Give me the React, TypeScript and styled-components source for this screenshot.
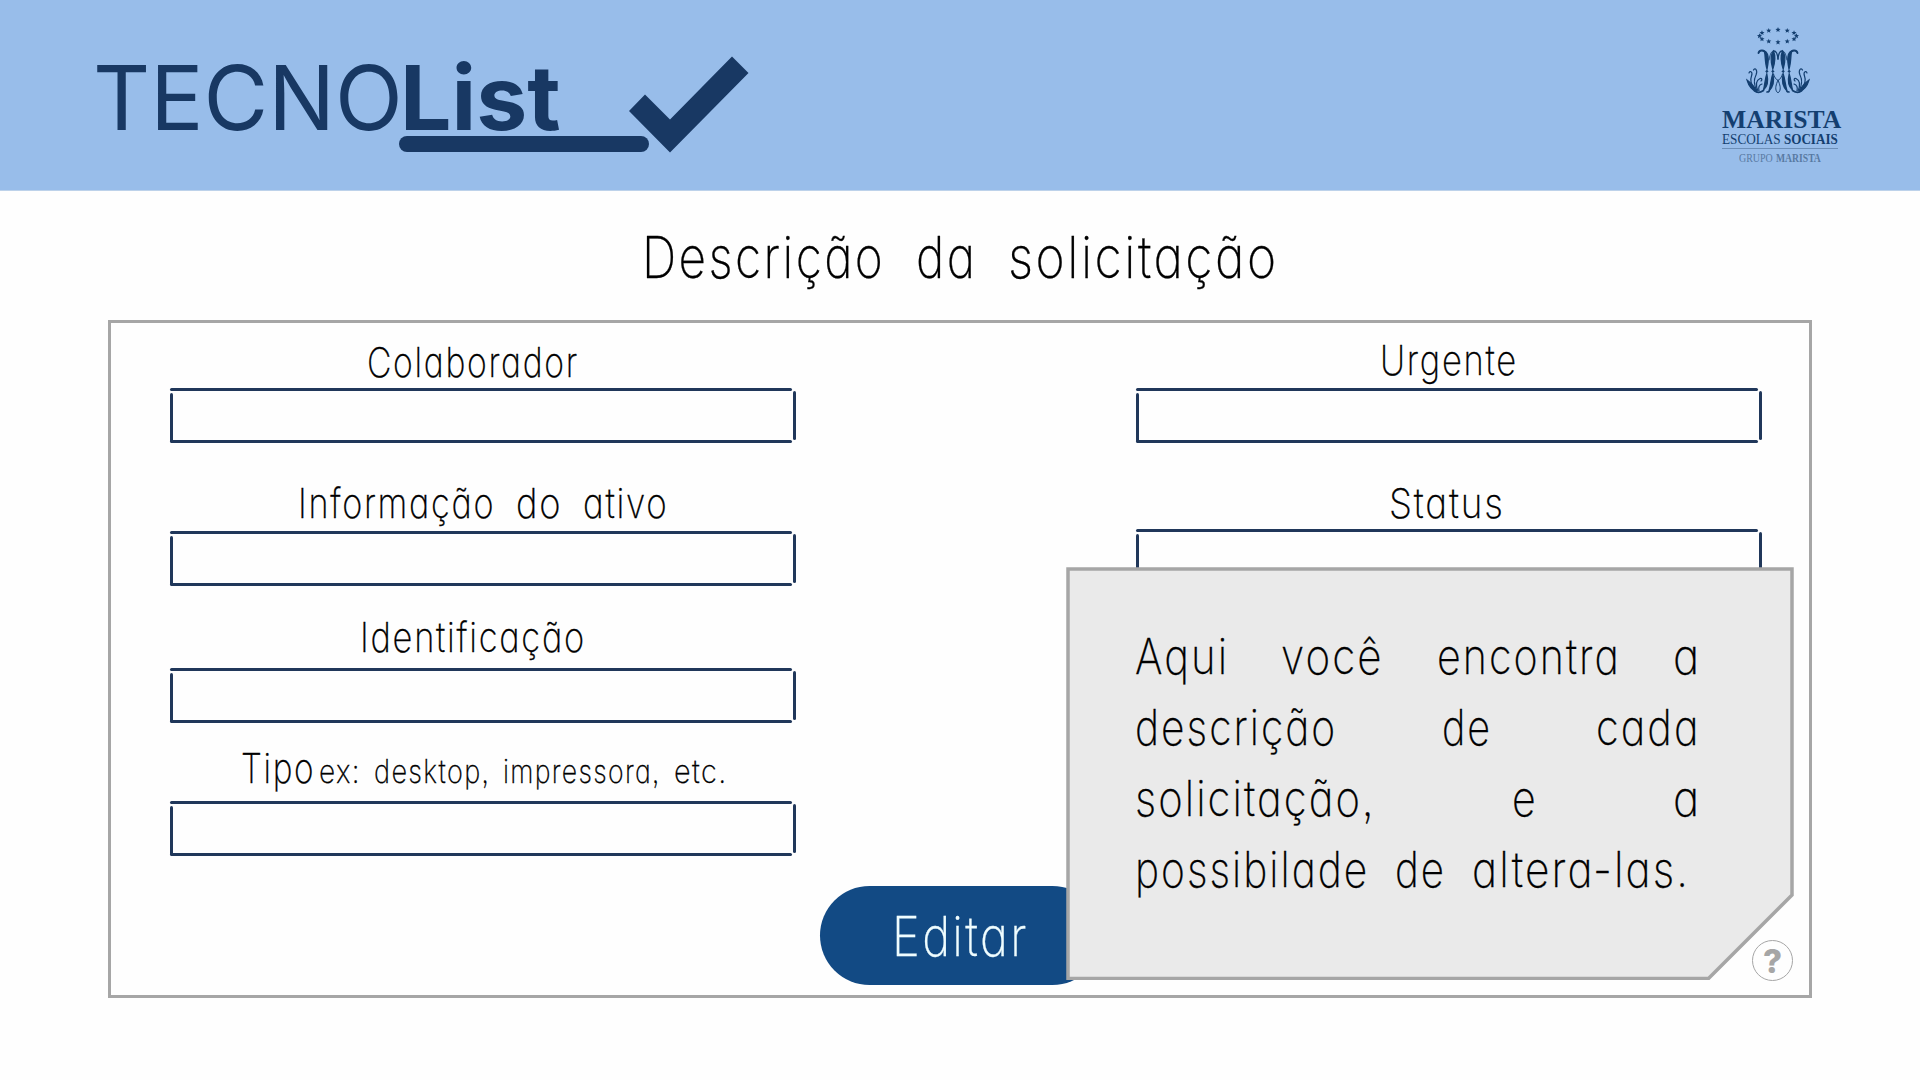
import React, { useLayoutEffect, useRef, useState } from "react";
import styled, { createGlobalStyle } from "styled-components";

const Global = createGlobalStyle`
  * { box-sizing: border-box; }
  body { margin: 0; background: #fefefe; }
`;

const Page = styled.div`
  width: 1920px;
  height: 1080px;
  overflow: hidden;
  background: #fefefe;
  color: #000;
  font-family: Inter, Roboto, sans-serif;
`;

const Header = styled.header`
  height: 191px;
  background: #98bdea;
  border-bottom: 1px solid #bdd2ea;
  display: flex;
  justify-content: space-between;
  color: #183863;
`;

const Brand = styled.div`
  display: flex;
  padding: 44px 0 0 93px;
`;

const BrandList = styled.div`
  width: 250px;
  margin-left: -4px;
`;

const BrandName = styled.div`
  padding-left: 1px;
`;

const BrandUnderline = styled.div`
  width: 250px;
  height: 16px;
  border-radius: 8px;
  background: #183863;
  margin-top: -16px;
`;

const Check = styled.svg`
  width: 120px;
  height: 97px;
  margin: 12px 0 0 -20px;
`;

const School = styled.div`
  width: 119px;
  margin: 27px 79px 0 0;
  display: flex;
  flex-direction: column;
  font-family: "Liberation Serif", serif;
  color: #143f70;
`;

const Emblem = styled.svg`
  width: 66px;
  height: 68px;
  margin: 0 0 12px 23px;
`;

const Rule = styled.div`
  width: 116px;
  height: 1px;
  margin: 2px 0 3px;
  background: #6c8fb9;
`;

const WordBox = styled.span<{ $w: number }>`
  display: block;
  flex: none;
  width: ${(p) => p.$w}px;
  white-space: nowrap;
`;

const Glyphs = styled.span`
  display: inline-block;
  transform-origin: 0 50%;
`;

/* A word condensed horizontally to a set width. */
function Word({ w, children }: { w: number; children: React.ReactNode }) {
  const ref = useRef<HTMLSpanElement>(null);
  const [scale, setScale] = useState(1);
  useLayoutEffect(() => {
    if (ref.current) setScale(w / ref.current.offsetWidth);
  }, [w]);
  return (
    <WordBox $w={w}>
      <Glyphs ref={ref} style={{ transform: `scaleX(${scale})` }}>
        {children}
      </Glyphs>
    </WordBox>
  );
}

const Text = styled.div<{ $size: number; $lh: number; $gap?: number; $weight?: number; $ls?: number }>`
  display: flex;
  gap: ${(p) => p.$gap ?? 0}px;
  font-size: ${(p) => p.$size}px;
  line-height: ${(p) => p.$lh}px;
  height: ${(p) => p.$lh}px;
  font-weight: ${(p) => p.$weight ?? 200};
  letter-spacing: ${(p) => p.$ls ?? 0.05}em;
  font-feature-settings: "cv11", "ss03";
  -webkit-text-stroke: ${(p) => (p.$weight ? 0 : 0.3)}px currentColor;
`;

const Title = styled(Text)`
  justify-content: center;
  margin-top: 26px;
`;

const SchoolGroup = styled(Text)`
  padding-left: 17px;
  color: #587aa3;
`;

const Panel = styled.main`
  position: relative;
  width: 1704px;
  height: 678px;
  margin: 23px 0 0 108px;
  border: 3px solid #a6a6a6;
  display: flex;
  justify-content: space-between;
  padding: 0 46px 0 59px;
`;

const Column = styled.div`
  width: 627px;
`;

const Field = styled.div<{ $top: number }>`
  padding-top: ${(p) => p.$top}px;
`;

const Label = styled.div<{ $x: number; $h: number }>`
  display: flex;
  align-items: baseline;
  gap: 4px;
  height: ${(p) => p.$h}px;
  padding-left: ${(p) => p.$x}px;
`;

const Input = styled.div`
  height: 55px;
  display: grid;
  grid-template-columns: 3px 619px 1px 3px;
  grid-template-rows: 3px 49px 3px;
`;

const Edge = styled.i<{ $area: string; $down?: number }>`
  grid-area: ${(p) => p.$area};
  background: #20375a;
  border-radius: 1.5px;
  margin-top: ${(p) => p.$down ?? 0}px;
  margin-bottom: ${(p) => -(p.$down ?? 0)}px;
`;

function Box() {
  return (
    <Input>
      <Edge $area="1 / 1 / 2 / 3" />
      <Edge $area="2 / 1 / 3 / 2" $down={2} />
      <Edge $area="2 / 4 / 3 / 5" />
      <Edge $area="3 / 1 / 4 / 3" />
    </Input>
  );
}

const Button = styled.button`
  position: absolute;
  left: 709px;
  top: 563px;
  width: 282px;
  height: 99px;
  border: 0;
  padding: 0 0 0 72px;
  border-radius: 50px;
  background: #124a84;
  color: #effdff;
  font-family: inherit;
  display: flex;
  align-items: center;
`;

const Callout = styled.aside`
  position: absolute;
  left: 955px;
  top: 244px;
  width: 728px;
  height: 413px;
  padding: 54px 93px 0 69px;
`;

const CalloutShape = styled.svg`
  position: absolute;
  inset: 0;
`;

const Paragraph = styled.div`
  position: relative;
`;

const ParaLine = styled(Text)<{ $last?: boolean }>`
  justify-content: ${(p) => (p.$last ? "flex-start" : "space-between")};
`;

const Help = styled.div`
  position: absolute;
  left: 1641px;
  top: 617px;
  width: 41px;
  height: 41px;
  border: 1px solid #a6a6a6;
  border-radius: 50%;
  display: flex;
  align-items: center;
  justify-content: center;
  color: #a6a6a6;
  font: 800 33px/40px Inter, sans-serif;
`;

const stars = Array.from({ length: 12 }, (_, i) => {
  const a = (i * Math.PI) / 6;
  return [33 + 18.5 * Math.cos(a), 9 + 6.2 * Math.sin(a)];
});

const starPoints = (cx: number, cy: number) =>
  Array.from({ length: 10 }, (_, i) => {
    const r = i % 2 ? 1.2 : 2.7;
    const a = -Math.PI / 2 + (i * Math.PI) / 5;
    return `${(cx + r * Math.cos(a)).toFixed(2)},${(cy + r * Math.sin(a)).toFixed(2)}`;
  }).join(" ");

function Half() {
  return (
    <g fill="none" stroke="#143f70" strokeLinecap="round">
      <path d="M13.500 26 C14.500 22.500 19.500 22.500 21 27" strokeWidth="1.900" />
      <path d="M19.500 24 C24.500 26 23.500 35 22 42 C20 36 20.500 30 19.500 24Z" fill="#143f70" strokeWidth="1.300" />
      <path d="M28.500 24 C31 30 29.500 37 27.800 42 C26 36 25.500 28 28.500 24Z" fill="#143f70" strokeWidth="1.300" />
      <path d="M29 24 C31 24 32.500 27 33 32" strokeWidth="1.300" />
      <path d="M28 24 C25.500 25 25 29 24 33" strokeWidth="1" />
      <circle cx="21.800" cy="44.400" r="0.900" fill="#143f70" />
      <circle cx="27.800" cy="44.400" r="0.900" fill="#143f70" />
      <path d="M21.800 47 C23.500 54 22 60 18.500 63 C20 57 20 52 21.800 47Z" fill="#143f70" strokeWidth="1.300" />
      <path d="M27.800 47 C29.500 54 28 60 24 64 C26 57 26 52 27.800 47Z" fill="#143f70" strokeWidth="1.300" />
      <path d="M24 64.500 L22 65 M18.500 63.500 C15 66 12 66 9.500 64" strokeWidth="1.600" />
      <path d="M28.500 47 C30 52 32 53 33 53 C31 58 30 61 31.500 64.500 Q32.300 65.500 33 65.500" strokeWidth="1" />
      <path d="M2 53 C4 60 7 63 12 65 C10 60 6 56 2 53Z" fill="#143f70" strokeWidth="1.200" />
      <path d="M9 61 C6 57 5 53 6.500 49 C8 45 5 43 4 46" strokeWidth="1.200" />
      <path d="M12 64 C8 56 9 52 11 48 C13 43 10 40 8.500 43" strokeWidth="1.200" />
      <path d="M13 64 C10 57 12 53 15 51.500 C17 51 17.500 53 16 54" strokeWidth="1.200" />
      <path d="M14 64 C13 60 14 58 17 57" strokeWidth="1.200" />
    </g>
  );
}

export default function App() {
  return (
    <Page>
      <Global />
      <Header>
        <Brand>
          <Text $size={89.5} $lh={108} $weight={400} $ls={0}>
            <Word w={310}>TECNO</Word>
          </Text>
          <BrandList>
            <BrandName>
              <Text $size={89.5} $lh={108} $weight={700} $ls={0}>
                <Word w={161}>List</Word>
              </Text>
            </BrandName>
            <BrandUnderline />
          </BrandList>
          <Check viewBox="629 56 120 97">
            <path d="M732 56.5 748.5 73 670 152.5 629 111 645 94.5 670 119.5Z" fill="#183863" />
          </Check>
        </Brand>
        <School>
          <Emblem viewBox="0 0 66 68">
            {stars.map(([x, y], i) => (
              <polygon key={i} points={starPoints(x, y)} fill="#143f70" />
            ))}
            <Half />
            <g transform="translate(66 0) scale(-1 1)">
              <Half />
            </g>
          </Emblem>
          <Text $size={25} $lh={25} $weight={700} $ls={0}>
            <Word w={119}>MARISTA</Word>
          </Text>
          <Text $size={15} $lh={14} $weight={400} $ls={0} $gap={3}>
            <Word w={59}>ESCOLAS</Word>
            <Word w={54}><b>SOCIAIS</b></Word>
          </Text>
          <Rule />
          <SchoolGroup $size={12} $lh={13} $weight={400} $ls={0} $gap={3}>
            <Word w={34}>GRUPO</Word>
            <Word w={45}><b>MARISTA</b></Word>
          </SchoolGroup>
        </School>
      </Header>
      <Title $size={58} $lh={80} $gap={31}>
        <Word w={243}>Descrição</Word>
        <Word w={61}>da</Word>
        <Word w={271}>solicitação</Word>
      </Title>
      <Panel>
        <Column>
          <Field $top={13}>
            <Label $x={197} $h={52}>
              <Text $size={41} $lh={52}><Word w={212}>Colaborador</Word></Text>
            </Label>
            <Box />
          </Field>
          <Field $top={32}>
            <Label $x={128} $h={56}>
              <Text $size={41} $lh={56} $gap={21}>
                <Word w={197}>Informação</Word>
                <Word w={46}>do</Word>
                <Word w={86}>ativo</Word>
              </Text>
            </Label>
            <Box />
          </Field>
          <Field $top={20}>
            <Label $x={190} $h={62}>
              <Text $size={41} $lh={62}><Word w={226}>Identificação</Word></Text>
            </Label>
            <Box />
          </Field>
          <Field $top={12}>
            <Label $x={71} $h={66}>
              <Text $size={41} $lh={66}><Word w={74}>Tipo</Word></Text>
              <Text $size={32} $lh={40} $gap={13}>
                <Word w={42}>ex:</Word>
                <Word w={116}>desktop,</Word>
                <Word w={158}>impressora,</Word>
                <Word w={54}>etc.</Word>
              </Text>
            </Label>
            <Box />
          </Field>
        </Column>
        <Column>
          <Field $top={9}>
            <Label $x={244} $h={56}>
              <Text $size={41} $lh={57}><Word w={138}>Urgente</Word></Text>
            </Label>
            <Box />
          </Field>
          <Field $top={34}>
            <Label $x={253} $h={52}>
              <Text $size={41} $lh={53}><Word w={116}>Status</Word></Text>
            </Label>
            <Box />
          </Field>
        </Column>
        <Button>
          <Text $size={55} $lh={100}><Word w={137}>Editar</Word></Text>
        </Button>
        <Callout>
          <CalloutShape width="728" height="413">
            <path d="M2 2H726V328L642.500 411.500H2Z" fill="#eaeaea" stroke="#a6a6a6" strokeWidth="3.5" />
          </CalloutShape>
          <Paragraph>
            <ParaLine $size={49} $lh={71}>
              <Word w={94}>Aqui</Word>
              <Word w={103}>você</Word>
              <Word w={184}>encontra</Word>
              <Word w={28}>a</Word>
            </ParaLine>
            <ParaLine $size={49} $lh={71}>
              <Word w={202}>descrição</Word>
              <Word w={50}>de</Word>
              <Word w={105}>cada</Word>
            </ParaLine>
            <ParaLine $size={49} $lh={71}>
              <Word w={241}>solicitação,</Word>
              <Word w={26}>e</Word>
              <Word w={28}>a</Word>
            </ParaLine>
            <ParaLine $size={49} $lh={71} $gap={26} $last>
              <Word w={234}>possibilade</Word>
              <Word w={51}>de</Word>
              <Word w={218}>altera-las.</Word>
            </ParaLine>
          </Paragraph>
        </Callout>
        <Help>?</Help>
      </Panel>
    </Page>
  );
}
